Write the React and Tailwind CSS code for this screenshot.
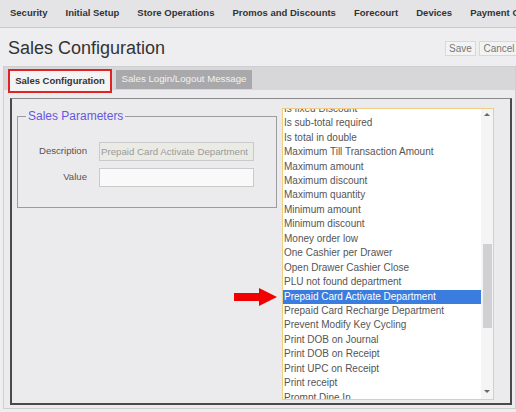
import React from "react";

const menu = ["Security", "Initial Setup", "Store Operations", "Promos and Discounts", "Forecourt", "Devices", "Payment Options"];

const params = [
  "Is fixed Discount",
  "Is sub-total required",
  "Is total in double",
  "Maximum Till Transaction Amount",
  "Maximum amount",
  "Maximum discount",
  "Maximum quantity",
  "Minimum amount",
  "Minimum discount",
  "Money order low",
  "One Cashier per Drawer",
  "Open Drawer Cashier Close",
  "PLU not found department",
  "Prepaid Card Activate Department",
  "Prepaid Card Recharge Department",
  "Prevent Modify Key Cycling",
  "Print DOB on Journal",
  "Print DOB on Receipt",
  "Print UPC on Receipt",
  "Print receipt",
  "Prompt Dine In",
];

export default function App() {
  const [selected, setSelected] = React.useState("Prepaid Card Activate Department");
  const [value, setValue] = React.useState("");

  return (
    <div className="relative w-[516px] h-[412px] overflow-hidden bg-[#eeeef0] font-['Liberation_Sans',Arial,sans-serif] select-none">
      {/* Top menu */}
      <div className="h-[28px] flex items-center gap-[18px] pl-[10px] bg-[#e4e4e6] border-b border-[#c9c9cc] text-[9.5px] font-bold text-[#333] whitespace-nowrap overflow-hidden">
        {menu.map((m) => (
          <span key={m}>{m}</span>
        ))}
      </div>

      {/* Page title + actions */}
      <div className="h-[38px] flex items-start justify-between pl-[8px]">
        <h1 className="mt-[9px] text-[18px] leading-[22px] text-[#333] whitespace-nowrap">Sales Configuration</h1>
        <div className="mt-[13px] mr-[-3px] flex gap-[3px] text-[10px] text-[#777]">
          <button className="w-[31px] h-[15px] flex items-center justify-center bg-[#f3f3f3] border border-[#d8d8d8]">Save</button>
          <button className="w-[40px] h-[15px] flex items-center justify-center bg-[#f3f3f3] border border-[#d8d8d8]">Cancel</button>
        </div>
      </div>

      {/* Tabbed box */}
      <div className="ml-[3px] h-[343px] border border-[#cfcfd2] bg-[#ececee]">
        <div className="h-[23px] flex items-start bg-[#d7d7d9]">
          <div className="ml-[4px] mt-[2px] w-[104px] h-[24px] flex items-center justify-center border-2 border-[#e02424] bg-[#f4f4f5] text-[9.5px] font-bold text-[#333] whitespace-nowrap">
            Sales Configuration
          </div>
          <div className="ml-[4px] mt-[3px] w-[136px] h-[19px] flex items-center justify-center bg-[#a9a9ab] text-[9.7px] text-[#f2f2f2] whitespace-nowrap">
            Sales Login/Logout Message
          </div>
        </div>

        {/* Panel */}
        <div className="mt-[8px] ml-[6px] w-[502px] h-[307px] border-t border-t-[#8a8a8a] border-x-2 border-b-2 border-[#4a4a4a] bg-[#ebebed] flex items-start">
          <fieldset className="ml-[5px] mt-[10px] w-[260px] h-[99px] border border-[#9c9c9e]">
            <legend className="ml-[8px] px-[2px] text-[12px] leading-[14px] text-[#6658e0]">Sales Parameters</legend>
            <div className="mt-[19px] flex flex-col gap-[7px] text-[9.6px] text-[#555]">
              <div className="flex items-center">
                <span className="w-[70px] pr-[1px] text-right">Description</span>
                <input
                  readOnly
                  value={selected}
                  className="ml-[11px] w-[155px] h-[19px] px-[1px] border border-[#cacaca] bg-[#ebebe5] text-[9.7px] text-[#9a9a9a] outline-none"
                />
              </div>
              <div className="flex items-center">
                <span className="w-[70px] pr-[1px] text-right">Value</span>
                <input
                  value={value}
                  onChange={(e) => setValue(e.target.value)}
                  className="ml-[11px] w-[155px] h-[19px] px-[2px] border border-[#cacaca] bg-[#f9f9f9] text-[10px] text-[#555] outline-none"
                />
              </div>
            </div>
          </fieldset>

          {/* Parameter list */}
          <div className="ml-[5px] mt-[9px] w-[212px] h-[292px] border border-[#efcd88] bg-white flex">
            <div className="w-[198px] h-full overflow-hidden">
              <div className="-mt-[7.2px]">
                {params.map((p) => (
                  <div
                    key={p}
                    onClick={() => setSelected(p)}
                    className={`h-[14.44px] leading-[14.44px] pl-[1px] text-[10px] whitespace-nowrap ${
                      selected === p ? "bg-[#3b7ddf] text-white" : "text-[#555]"
                    }`}
                  >
                    {p}
                  </div>
                ))}
              </div>
            </div>
            <div className="w-[12px] h-full bg-[#f4f4f5] flex flex-col items-center">
              <div className="mt-[4px] w-0 h-0 border-x-[3px] border-x-transparent border-b-[3px] border-b-[#666]" />
              <div className="mt-[128px] w-[9px] h-[84px] bg-[#d0d0d2]" />
              <div className="mt-auto mb-[6px] w-0 h-0 border-x-[3px] border-x-transparent border-t-[3px] border-t-[#666]" />
            </div>
          </div>
        </div>
      </div>

      {/* Pointer arrow */}
      <svg className="absolute left-[234px] top-[288px]" width="43" height="18" viewBox="0 0 43 18">
        <rect x="0" y="5" width="26" height="8" fill="#f00000" />
        <polygon points="25,0 43,9 25,18" fill="#f00000" />
      </svg>
    </div>
  );
}
